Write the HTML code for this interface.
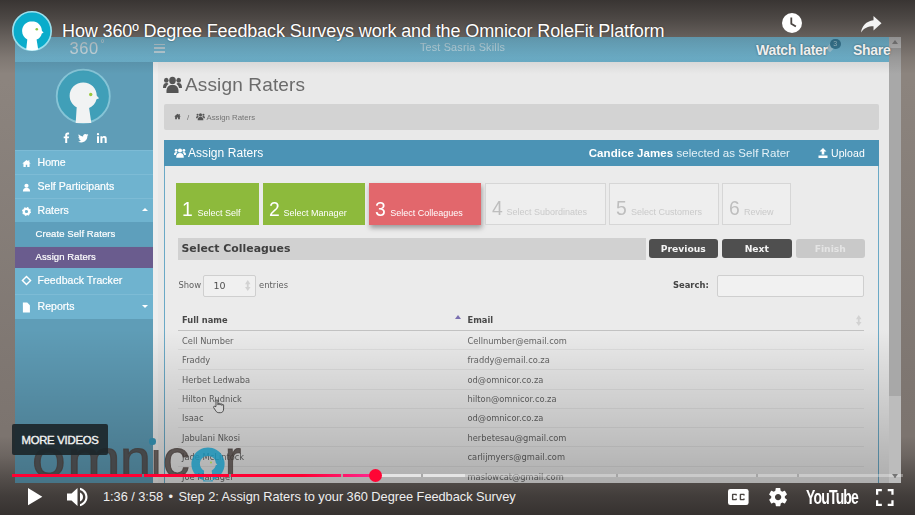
<!DOCTYPE html>
<html lang="en">
<head>
<meta charset="utf-8">
<title>How 360º Degree Feedback Surveys work and the Omnicor RoleFit Platform</title>
<style>
*{box-sizing:border-box;margin:0;padding:0}
html,body{width:915px;height:515px;overflow:hidden;background:#8a827d;font-family:"Liberation Sans",sans-serif}
#player{position:absolute;left:0;top:0;width:915px;height:515px;overflow:hidden;background:linear-gradient(#8c847e 0,#8c847e 80px,#7c746f 430px,#7c746f 100%)}
#video{position:absolute;left:14.5px;top:36.5px;width:886.2px;height:446.5px;overflow:hidden;background:#e9e9e9;font-family:"DejaVu Sans","Liberation Sans",sans-serif;filter:blur(.45px)}
.abs{position:absolute}
svg{display:block;overflow:visible}
/* ---- app inside video ---- */
#apphead{left:0;top:0;width:874.5px;height:25px;background:linear-gradient(#82d0ee,#70b6d1)}
#apphead .logo{left:55px;top:2px;color:#dcedf4;font:16.5px "Liberation Sans",sans-serif;letter-spacing:.6px}
#apphead .deg{left:86px;top:1.5px;color:#dcedf4;font:10px "Liberation Sans",sans-serif}
#apphead .ham{left:139px;top:7px;width:11px;height:10px}
#apphead .ham i{display:block;height:1.7px;background:#c8e0ea;margin-bottom:2px}
#apphead .ttl{left:0;width:896px;top:4.5px;text-align:center;color:#cdeefa;font:10.8px "Liberation Sans",sans-serif;letter-spacing:.2px}
#side{left:0;top:25px;width:138.5px;height:422px;background:#5f9db7}
#side .mi{position:absolute;left:0;width:138.5px;height:24.2px;background:#6fb3cf;border-top:1px solid #7dbbd5;color:#fff;font:10.5px "Liberation Sans",sans-serif;line-height:23px;padding-left:23px;letter-spacing:.05px;-webkit-text-stroke:.2px #fff}
#side .sub{background:#5e9fbc;border-top:0;padding-left:21px;font-size:9.5px;letter-spacing:.1px}
#side .act{background:#6a5c8e}
#side .ic{position:absolute;left:7.5px;top:7.5px;width:9px;height:9px}
#side .car{position:absolute;right:5px;top:10px;border:3.5px solid transparent}
#main{left:138.5px;top:25px;width:736px;height:422px;background:#e9e9e9;border-left:5px solid #eee}
#scroll{left:874.5px;top:0;width:12px;height:446.5px;background:#bcbcbc}
#scroll .thumb{left:0;top:11px;width:12px;height:348px;background:#a8a8a8}
#scroll .up{left:0;top:0;width:12px;height:11px;background:#c9c9c9}
h1.pt{left:170.5px;top:37px;font:19px "Liberation Sans",sans-serif;color:#6b6b6b;font-weight:400;letter-spacing:.15px}
#bc{left:149.5px;top:67.5px;width:715px;height:25.5px;background:#d3d3d3;border-radius:2px;color:#747474;font:7.8px "Liberation Sans",sans-serif;line-height:27px}
#panel{left:149.5px;top:103.5px;width:715px;height:350px;background:#ebebeb;border:1px solid #6aa9c6;border-top:0}
#panel .ph{left:-1px;top:0;width:715px;height:26px;background:#4b93b5;color:#fff;font:12px "Liberation Sans",sans-serif;line-height:26px;letter-spacing:.05px}
.step{position:absolute;top:43px;height:42px;color:#fff;font:9px "Liberation Sans",sans-serif;white-space:nowrap}
.step b{font-weight:400;font-size:21px;position:absolute;left:6px;bottom:4px;transform:scaleX(.92);transform-origin:0 0}
.step span{position:absolute;bottom:7px}
.step.g{background:#8dba3c}
.step.r{background:#e2676c;box-shadow:1px 3px 5px rgba(0,0,0,.35)}
.step.w{background:#eee;border:1px solid #d6d6d6;color:#cacaca}.step.w b{color:#bebebe}
.btn{position:absolute;top:98.5px;height:19.5px;width:69.5px;border-radius:3px;background:#4f4f4f;color:#f4f4f4;font:bold 9.2px "DejaVu Sans",sans-serif;text-align:center;line-height:19px}
.row{position:absolute;left:13px;width:686px;height:18.6px;border-bottom:1px solid #dedede;color:#646464;font:8.3px "DejaVu Sans",sans-serif;line-height:18px}
.row span{position:absolute;left:4px}
.row em{position:absolute;left:289.5px;font-style:normal}
/* ---- youtube chrome ---- */
#gtop{left:0;top:0;width:915px;height:74px;background:linear-gradient(rgba(14,12,12,.66) 0,rgba(14,12,12,.5) 25%,rgba(14,12,12,.3) 50%,rgba(14,12,12,.1) 78%,rgba(14,12,12,0) 100%)}
#gbot{left:0;top:436px;width:915px;height:79px;background:linear-gradient(rgba(14,12,12,0) 0,rgba(14,12,12,.14) 25%,rgba(14,12,12,.34) 50%,rgba(14,12,12,.52) 75%,rgba(14,12,12,.64) 100%)}
#yttitle{left:62px;top:20.5px;color:#fff;font:18px "Liberation Sans",sans-serif;white-space:nowrap;text-shadow:0 0 2px rgba(0,0,0,.5);letter-spacing:-.12px}
.ytl{color:#efefef;font:bold 14px "Liberation Sans",sans-serif;white-space:nowrap;text-shadow:0 0 2px rgba(0,0,0,.5);letter-spacing:-.3px}
#more{left:12px;top:424px;width:96px;height:31px;background:rgba(28,38,42,.92);border-radius:2px;color:#f1f1f1;font:11.3px "Liberation Sans",sans-serif;line-height:32px;text-align:center;letter-spacing:-.25px;-webkit-text-stroke:.4px #f1f1f1}
#ctl{color:#eee;font:12.8px "Liberation Sans",sans-serif;white-space:nowrap;left:103px;top:489px;letter-spacing:-.04px}
#wm{left:0;top:428.4px;width:260px;height:60px;color:rgba(66,58,55,.8);-webkit-text-stroke:1px rgba(66,58,55,.8);font:52px "Liberation Sans",sans-serif;line-height:60px;white-space:nowrap;filter:blur(.5px)}#wm span{position:absolute;top:0;transform-origin:0 0}
#ytlogo{left:806px;top:483px;color:#fff;font:bold 21px "Liberation Sans",sans-serif;letter-spacing:-1.200px;transform:scaleX(.665);transform-origin:0 0;line-height:28px}
</style>
</head>
<body>
<div id="player">
  <div class="abs" id="gbot"></div>
  <div id="video">
    <div class="abs" id="apphead">
      <div class="abs logo">360</div><div class="abs deg">°</div>
      <div class="abs ham"><i></i><i></i><i></i></div>
      <div class="abs ttl">Test Sasria Skills</div>
      <i class="abs" style="left:812px;top:8px;width:6px;height:6px;background:#bfe0ec;transform:rotate(45deg);opacity:.7"></i><i class="abs" style="left:815.500px;top:2px;width:10.500px;height:10.500px;border-radius:50%;background:#3c86a5;color:#b7dbe8;font:normal 7px 'Liberation Sans',sans-serif;text-align:center;line-height:10.500px">3</i>
    </div>
    <div class="abs" id="side">
      <svg class="abs" style="left:40.700px;top:6.800px" width="56.500" height="56.500" viewBox="0 0 56 56"><circle cx="28" cy="28" r="26.3" fill="#409fb8" stroke="#86c4d6" stroke-width="1.8"/><path d="M28 14.300c-7.500 0-13.500 5.800-13.500 13.200 0 5 2.800 9.300 7 11.500L20.500 54.600h15.500L33.800 39.600c3.800-1.500 6.500-4.600 7.400-8.600l2.500-1-2.300-2.600C41.400 20 35.500 14.300 28 14.300z" fill="#f1f3f3"/><circle cx="35.400" cy="26.300" r="1.700" fill="#9bc83c"/></svg>
      <svg class="abs" style="left:48px;top:70px" width="48" height="12" viewBox="0 0 48 12"><path d="M4.200 11V6.300h1.600l.3-1.900H4.200V3.300c0-.6.200-.9 1-.9h.9V.7C5.900.7 5.300.6 4.700.6 3.200.6 2.200 1.500 2.200 3.100v1.300H.7v1.900h1.500V11z" fill="#fff"/><path d="M25.500 3c-.4.200-.8.300-1.200.3.400-.3.800-.7.900-1.200-.4.200-.9.400-1.400.5-.4-.4-.9-.7-1.600-.7-1.200 0-2.100 1-2.100 2.100 0 .2 0 .3.100.5-1.800-.1-3.300-.9-4.400-2.200-.2.300-.3.700-.3 1.100 0 .7.400 1.400.9 1.800-.3 0-.7-.1-1-.3 0 1 .7 1.900 1.700 2.100-.3.100-.6.100-1 0 .3.800 1.100 1.500 2 1.500-.9.700-2 1-3.100.9 1 .6 2.100 1 3.300 1 3.900 0 6.100-3.300 6.100-6.100v-.3c.4-.3.800-.6 1.100-1z" fill="#fff"/><path transform="translate(-1 0)" d="M35 4.200h2V11h-2zM36 1a1.100 1.100 0 110 2.300A1.100 1.100 0 0136 1zM38.400 4.200h1.900v.9c.3-.6 1-1.100 2-1.100 2 0 2.400 1.300 2.400 3V11h-2V7.400c0-.8 0-1.700-1.100-1.700s-1.200.8-1.200 1.700V11h-2z" fill="#fff"/></svg>
      <div class="mi" style="top:88.500px"><svg class="ic" viewBox="0 0 10 10"><path d="M5 1L.3 5h1.300v4h2.600V6.300h1.600V9h2.600V5h1.300L8.200 3.600V1.500H7v1.100z" fill="#fff"/></svg>Home</div>
      <div class="mi" style="top:112.700px"><svg class="ic" viewBox="0 0 10 10"><circle cx="5" cy="3" r="2.300" fill="#fff"/><path d="M1 9.500c0-3 1.500-4.200 4-4.200s4 1.200 4 4.200z" fill="#fff"/></svg>Self Participants</div>
      <div class="mi" style="top:136.900px"><svg class="ic" viewBox="0 0 10 10"><circle cx="5" cy="5" r="3" fill="none" stroke="#fff" stroke-width="2.400"/><circle cx="5" cy="5" r="4.300" fill="none" stroke="#fff" stroke-width="1.400" stroke-dasharray="1.700 1.680"/></svg>Raters<i class="car" style="border-bottom-color:#fff;top:6px"></i></div>
      <div class="mi sub" style="top:160.700px;line-height:23.500px">Create Self Raters</div>
      <div class="mi sub act" style="top:185.100px;height:21.700px;line-height:20.500px">Assign Raters</div>
      <div class="mi" style="top:206.800px;height:25.700px;border-top:0;line-height:25px"><svg class="ic" style="top:8px" viewBox="0 0 10 10"><path d="M5 .5L9.500 5 5 9.500.5 5z" fill="none" stroke="#fff" stroke-width="1.600"/></svg>Feedback Tracker</div>
      <div class="mi" style="top:232.500px;height:24.500px"><svg class="ic" viewBox="0 0 10 10"><path d="M1 -.5h4.800l3 3v8H1z" fill="#fff"/></svg>Reports<i class="car" style="border-top-color:#fff"></i></div>
    </div>
    <div class="abs" id="main"></div>
    <h1 class="abs pt">Assign Raters</h1>
    <svg class="abs" style="left:148.500px;top:39px" width="19" height="17.500" preserveAspectRatio="none" viewBox="0 0 19 16"><g fill="#555"><circle cx="9.500" cy="4" r="3.300"/><path d="M3.500 15.500c-.5-5 2-7.500 6-7.500s6.500 2.500 6 7.500z"/><circle cx="3.300" cy="3.800" r="2.300"/><circle cx="15.700" cy="3.800" r="2.300"/><path d="M0 11c0-3 1-4.500 3.500-4.500 1 0 1.500.3 2 .8C3.800 8.500 3 10 3 11zM19 11c0-3-1-4.500-3.500-4.500-1 0-1.500.3-2 .8 1.700 1.200 2.500 2.700 2.500 3.700z"/></g></svg>
    <div class="abs" id="bc"><svg class="abs" style="left:10px;top:9px" width="7" height="7" viewBox="0 0 10 10"><path d="M5 1L.3 5h1.300v4h2.600V6.300h1.600V9h2.600V5h1.300L8.200 3.600V1.500H7v1.100z" fill="#555"/></svg><span class="abs" style="left:23px">/</span><svg class="abs" style="left:32px;top:9px" width="9" height="7.500" viewBox="0 0 19 16"><g fill="#555"><circle cx="9.500" cy="4" r="3.300"/><path d="M3.500 15.500c-.5-5 2-7.500 6-7.500s6.500 2.500 6 7.500z"/><circle cx="3.300" cy="3.800" r="2.300"/><circle cx="15.700" cy="3.800" r="2.300"/><path d="M0 11c0-3 1-4.500 3.500-4.500 1 0 1.500.3 2 .8C3.800 8.500 3 10 3 11zM19 11c0-3-1-4.500-3.500-4.500-1 0-1.500.3-2 .8 1.700 1.200 2.500 2.700 2.500 3.700z"/></g></svg><span class="abs" style="left:42.500px">Assign Raters</span></div>
    <div class="abs" id="panel">
      <div class="abs ph">
        <svg class="abs" style="left:10px;top:8px" width="12" height="10" viewBox="0 0 19 16"><g fill="#fff"><circle cx="9.500" cy="4" r="3.300"/><path d="M3.500 15.500c-.5-5 2-7.500 6-7.500s6.500 2.500 6 7.500z"/><circle cx="3.300" cy="3.800" r="2.300"/><circle cx="15.700" cy="3.800" r="2.300"/><path d="M0 11c0-3 1-4.500 3.500-4.500 1 0 1.500.3 2 .8C3.800 8.500 3 10 3 11zM19 11c0-3-1-4.500-3.500-4.500-1 0-1.500.3-2 .8 1.700 1.200 2.500 2.700 2.500 3.700z"/></g></svg>
        <span class="abs" style="left:24px">Assign Raters</span>
        <span class="abs" style="right:89px;font-size:11.500px;color:#e4f1f7;letter-spacing:.05px"><b style="color:#fff">Candice James</b> selected as Self Rater</span>
        <svg class="abs" style="left:654px;top:8px" width="10" height="10" viewBox="0 0 10 10"><path d="M5 0l3.500 3.500h-2.200v3h-2.600v-3H1.500zM.5 7.500h9v2.500h-9z" fill="#fff"/></svg>
        <span class="abs" style="left:667px;font-size:10.500px;letter-spacing:.1px">Upload</span>
      </div>
      <div class="step g" style="left:11.400px;width:82.300px"><b>1</b><span style="left:21px">Select Self</span></div>
      <div class="step g" style="left:97.600px;width:102.200px"><b>2</b><span style="left:21px">Select Manager</span></div>
      <div class="step r" style="left:204.200px;width:111.500px"><b>3</b><span style="left:21px">Select Colleagues</span></div>
      <div class="step w" style="left:319.500px;width:121px"><b>4</b><span style="left:21px">Select Subordinates</span></div>
      <div class="step w" style="left:444px;width:109.500px"><b>5</b><span style="left:21px">Select Customers</span></div>
      <div class="step w" style="left:557px;width:68.500px"><b>6</b><span style="left:21px">Review</span></div>
      <div class="abs" style="left:12.500px;top:98px;width:468px;height:21.500px;background:#d1d1d1;color:#404040;font:bold 10.900px 'DejaVu Sans',sans-serif;line-height:21px;padding-left:4px">Select Colleagues</div>
      <div class="btn" style="left:483.500px">Previous</div>
      <div class="btn" style="left:557px">Next</div>
      <div class="btn" style="left:630.500px;background:#c9c9c9;color:#e4e4e4">Finish</div>
      <div class="abs" style="left:13.500px;top:140px;color:#606060;font:8.400px 'DejaVu Sans',sans-serif">Show</div>
      <div class="abs" style="left:38px;top:134.800px;width:53px;height:22.500px;border:1px solid #cfcfcf;background:#f0f0f0;border-radius:2px;color:#505050;font:9.500px 'DejaVu Sans',sans-serif;line-height:20.500px;padding-left:9.500px">10<svg class="abs" style="right:5px;top:4.500px" width="5.500" height="11" viewBox="0 0 6 12"><path d="M3 0l3 4.500H4v3h2L3 12 0 7.500h2v-3H0z" fill="#d2d2d2"/></svg></div>
      <div class="abs" style="left:94px;top:140px;color:#606060;font:8.400px 'DejaVu Sans',sans-serif">entries</div>
      <div class="abs" style="left:508px;top:139.800px;color:#444;font:bold 8.400px 'DejaVu Sans',sans-serif">Search:</div>
      <div class="abs" style="left:552px;top:135.200px;width:147px;height:21.500px;border:1px solid #cfcfcf;background:#f1f1f1;border-radius:2px"></div>
      <div class="row" style="top:171px;height:19.600px;border-bottom:1.500px solid #c2c2c2;color:#484848;font-weight:bold"><span>Full name</span><em>Email</em><i class="abs" style="left:277px;top:4px;border:3px solid transparent;border-bottom:4.500px solid #7a6fb0;border-top:0"></i><svg class="abs" style="right:3px;top:4px" width="5.500" height="11" viewBox="0 0 6 12"><path d="M3 0l3 4.500H4v3h2L3 12 0 7.500h2v-3H0z" fill="#d2d2d2"/></svg></div>
      <div class="row" style="top:191.6px"><span>Cell Number</span><em>Cellnumber@email.com</em></div>
      <div class="row" style="top:211.0px"><span>Fraddy</span><em>fraddy@email.co.za</em></div>
      <div class="row" style="top:231.0px"><span>Herbet Ledwaba</span><em>od@omnicor.co.za</em></div>
      <div class="row" style="top:250.0px"><span>Hilton Rudnick</span><em>hilton@omnicor.co.za</em></div>
      <div class="row" style="top:269.4px"><span>Isaac</span><em>od@omnicor.co.za</em></div>
      <div class="row" style="top:288.8px"><span>Jabulani Nkosi</span><em>herbetesau@gmail.com</em></div>
      <div class="row" style="top:308.2px"><span>Jade McLintock</span><em>carlijmyers@gmail.com</em></div>
      <div class="row" style="top:327.6px"><span>Joe Manager</span><em>maslowcat@gmail.com</em></div>
    </div>
    <svg class="abs" style="left:198px;top:362px" width="11" height="14" viewBox="0 0 11 14"><path d="M3 7.500V1.800c0-1.300 1.900-1.300 1.900 0v4h.3V5c0-1.100 1.700-1.100 1.700 0v1h.3v-.6c0-1 1.600-1 1.600 0v1h.3v-.300c0-.9 1.500-.9 1.500 0v3.900c0 2.300-1.200 3.700-3.200 3.700H5.800c-1.400 0-2.300-.7-3-1.800L.6 8.500c-.5-.9.700-1.700 1.400-.9z" fill="#f4f4f4" stroke="#4a4a4a" stroke-width=".9"/></svg>
    <div class="abs" style="left:0;top:292px;width:887px;height:155px;background:linear-gradient(rgba(0,0,0,0),rgba(0,0,0,.26))"></div>
    <div class="abs" id="scroll"><div class="abs up"></div><div class="abs thumb"></div>
      <i class="abs" style="left:3px;top:3px;border:3px solid transparent;border-bottom:4px solid #8a8a8a;border-top:0"></i>
      <i class="abs" style="left:3px;top:437px;border:3px solid transparent;border-top:4px solid #333;border-bottom:0"></i>
    </div>
  </div>
  <!-- omnicor watermark (part of video) -->
  <div class="abs" id="wm"><span style="left:32.3px;transform:scaleX(1.164);">o</span><span style="left:66.8px;transform:scaleX(1.240);">m</span><span style="left:120.1px;transform:scaleX(1.065);">n</span><span style="left:150.5px;transform:scaleX(0.880);clip-path:inset(36% 0 0 0);">i</span><span style="left:162.5px;transform:scaleX(1.020);">c</span><span style="left:225.2px;transform:scaleX(0.930);">r</span><svg class="abs" style="left:187.200px;top:14.800px" width="42" height="42" viewBox="0 0 42 42"><path fill-rule="evenodd" d="M21 4.400a16.600 16.600 0 1 0 .010 0zM20.800 12.900c-4.400 0-7.900 3.500-7.900 7.900 0 3 1.700 5.600 4.200 6.900L16.100 38.500h9.800L24.700 27.500c2.100-1 3.600-2.900 4-5.200l1.600-.6-1.500-1.600c-.1-4.200-3.600-7.200-8-7.200z" fill="#1b93b8" opacity=".85"/><circle cx="24" cy="19.500" r=".9" fill="#9bc83c"/></svg><i class="abs" style="left:149.300px;top:9.700px;width:6.500px;height:6.500px;border-radius:50%;background:#2e7f9c"></i></div>
  <div class="abs" id="gtop"></div>
  <!-- youtube top chrome -->
  <svg class="abs" style="left:12px;top:10.500px" width="40" height="40" viewBox="0 0 40 40"><circle cx="20" cy="20" r="19.200" fill="#0aaccb" stroke="#9ae0ee" stroke-width="1.600"/><path d="M20 10.300c-5.500 0-9.900 4.300-9.900 9.700 0 3.700 2.100 6.900 5.200 8.500L14.200 38.600c1.800.6 3.800.9 5.800.9 2.200 0 4.300-.4 6.200-1.100L24.600 28.600c2.700-1.100 4.600-3.400 5.200-6.200l1.800-.7-1.700-1.900c-.1-5.300-4.500-9.500-9.900-9.500z" fill="#fff"/><circle cx="24.800" cy="18.200" r="1.300" fill="#8cc63f"/></svg>
  <div class="abs" id="yttitle">How 360º Degree Feedback Surveys work and the Omnicor RoleFit Platform</div>
  <svg class="abs" style="left:780.700px;top:11.800px" width="22" height="22" viewBox="0 0 22 22"><circle cx="11" cy="11" r="10" fill="#fff"/><path d="M10.300 5.500v6.300l4.600 2.700" fill="none" stroke="#4a4542" stroke-width="1.800"/></svg>
  <div class="abs ytl" style="left:756px;top:42px">Watch later</div>
  <svg class="abs" style="left:860.500px;top:15.800px" width="20.500" height="16.500" viewBox="0 0 20.500 16.500"><path d="M12.500 0l8 7.300-8 7.300v-4.300C7 10.300 3 12 0 16.500 1 10 5 5.300 12.500 4.300z" fill="#f4f4f4"/></svg>
  <div class="abs ytl" style="left:853px;top:42px">Share</div>
  <div class="abs" id="more">MORE VIDEOS</div>
  <!-- progress bar -->
  <div class="abs" style="left:12px;top:474px;width:891px;height:3px;background:rgba(255,255,255,.32)"></div>
  <div class="abs" style="left:375px;top:474px;width:90px;height:3px;background:rgba(255,255,255,.5)"></div>
  <div class="abs" style="left:12px;top:474px;width:363px;height:3px;background:linear-gradient(90deg,#f03 0,#f03 80%,#ff2791 100%)"></div>
  <i class="abs" style="left:141.500px;top:474px;width:2px;height:3px;background:#5d7d8c"></i>
  <i class="abs" style="left:229px;top:474px;width:2px;height:3px;background:#8a8a8a"></i>
  <i class="abs" style="left:341px;top:474px;width:2px;height:3px;background:#a9a4a1"></i>
  <i class="abs" style="left:420.500px;top:474px;width:2px;height:3px;background:#a8a8a8"></i>
  <i class="abs" style="left:615.500px;top:474px;width:2px;height:3px;background:#a5a5a5"></i>
  <i class="abs" style="left:755.500px;top:474px;width:2px;height:3px;background:#a5a5a5"></i><i class="abs" style="left:797px;top:474px;width:2px;height:3px;background:#a5a5a5"></i>
  <i class="abs" style="left:368.500px;top:469px;width:13px;height:13px;border-radius:50%;background:#ff0535"></i>
  <!-- bottom controls -->
  <svg class="abs" style="left:27.800px;top:488.400px" width="14.800" height="17.300" viewBox="0 0 16 18" preserveAspectRatio="none"><path d="M0 0l15.500 9L0 18z" fill="#fff"/></svg>
  <svg class="abs" style="left:66.700px;top:487px" width="23" height="20" viewBox="0 0 23 20"><path d="M0 6.500h4.500L10.500 1v18l-6-5.500H0z" fill="#fff"/><path d="M13 5.500c1.800.8 3 2.500 3 4.500s-1.200 3.700-3 4.500z" fill="#fff"/><path d="M13 .8c4.300 1 7.500 4.700 7.500 9.200s-3.200 8.200-7.500 9.200v-2.100c3.100-1 5.400-3.700 5.400-7.100S16.100 3.900 13 2.900z" fill="#fff"/></svg>
  <div class="abs" id="ctl">1:36 / 3:58 <span style="padding:0 2px">•</span> Step 2: Assign Raters to your 360 Degree Feedback Survey</div>
  <svg class="abs" style="left:727.600px;top:488.700px" width="20.600" height="15.900" viewBox="0 0 22 18" preserveAspectRatio="none"><rect x="0" y="0" width="22" height="18" rx="2.500" fill="#fff"/><path d="M9.500 7.300H8V6.800H5.700v4.400H8v-.5h1.500v.9c0 .6-.5 1.100-1.100 1.100H5.300c-.6 0-1.100-.5-1.100-1.100V6.400c0-.6.500-1.100 1.100-1.100h3.100c.6 0 1.100.5 1.100 1.100zM17.800 7.300h-1.500V6.800H14v4.400h2.300v-.5h1.500v.9c0 .6-.5 1.100-1.100 1.100h-3.100c-.6 0-1.100-.5-1.100-1.100V6.400c0-.6.500-1.100 1.100-1.100h3.100c.6 0 1.100.5 1.100 1.100z" fill="#4a4542"/></svg>
  <svg class="abs" style="left:769.200px;top:487.700px" width="18.200" height="18.200" viewBox="0 0 20 20"><path d="M17.400 11c0-.3.100-.7.100-1s0-.7-.1-1l2.100-1.700c.2-.2.200-.4.100-.6l-2-3.500c-.1-.2-.4-.3-.6-.2l-2.500 1c-.5-.4-1.100-.7-1.700-1L12.400.4c0-.2-.2-.4-.5-.4H7.900c-.2 0-.5.200-.5.400L7 3.100c-.6.200-1.100.6-1.700 1l-2.500-1c-.2-.1-.5 0-.6.200l-2 3.500c-.1.200-.1.500.1.600L2.500 9c0 .3-.1.700-.1 1s0 .7.100 1L.4 12.700c-.2.200-.2.400-.1.600l2 3.500c.1.200.4.300.6.200l2.500-1c.5.400 1.100.7 1.700 1l.4 2.600c0 .2.200.4.500.4h4c.2 0 .5-.2.500-.4l.4-2.600c.6-.2 1.200-.6 1.700-1l2.500 1c.2.100.5 0 .6-.2l2-3.500c.1-.2.100-.5-.1-.6zM10 13.500c-1.900 0-3.500-1.600-3.500-3.500S8.100 6.500 10 6.500s3.500 1.600 3.500 3.500-1.600 3.500-3.500 3.500z" fill="#fff"/></svg>
  <div class="abs" id="ytlogo">YouTube</div>
  <svg class="abs" style="left:875.800px;top:488.600px" width="17.600" height="17" viewBox="0 0 18 18" preserveAspectRatio="none"><path d="M0 6V0h6v2.300H2.300V6zM12 0h6v6h-2.300V2.300H12zM18 12v6h-6v-2.300h3.700V12zM6 18H0v-6h2.300v3.700H6z" fill="#fff"/></svg>
</div>
</body>
</html>
